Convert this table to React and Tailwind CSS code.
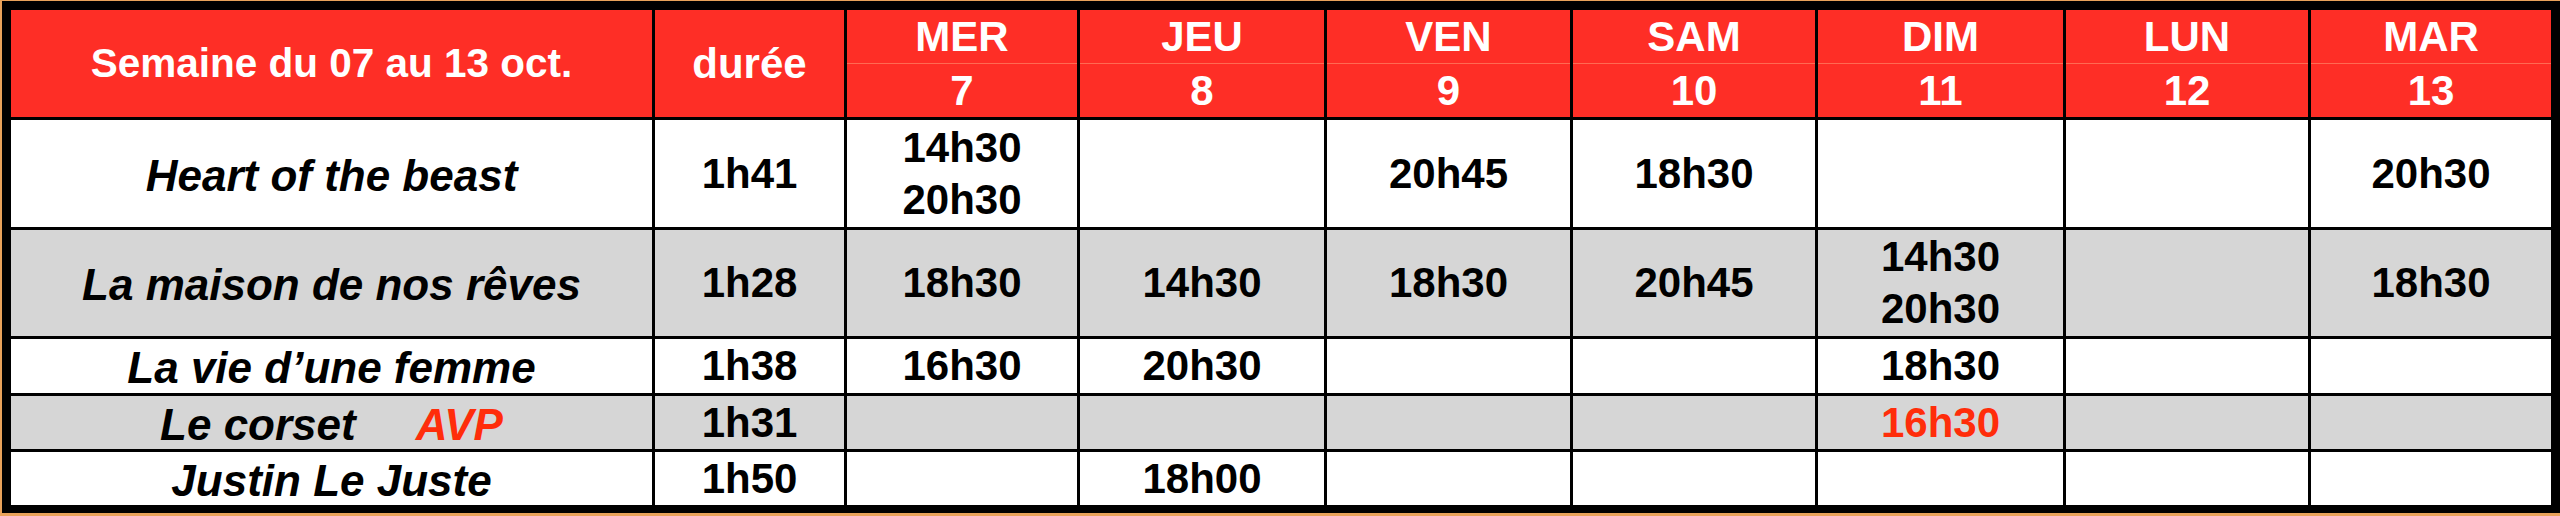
const days = [
  { name: "MER", num: "7" },
  { name: "JEU", num: "8" },
  { name: "VEN", num: "9" },
  { name: "SAM", num: "10" },
  { name: "DIM", num: "11" },
  { name: "LUN", num: "12" },
  { name: "MAR", num: "13" },
];

// one entry per film, times listed mer -> mar
const films = [
  {
    title: "Heart of the beast",
    duration: "1h41",
    gray: false,
    times: [["14h30", "20h30"], [], ["20h45"], ["18h30"], [], [], ["20h30"]],
  },
  {
    title: "La maison de nos rêves",
    duration: "1h28",
    gray: true,
    times: [["18h30"], ["14h30"], ["18h30"], ["20h45"], ["14h30", "20h30"], [], ["18h30"]],
  },
  {
    title: "La vie d’une femme",
    duration: "1h38",
    gray: false,
    times: [["16h30"], ["20h30"], [], [], ["18h30"], [], []],
  },
  {
    title: "Le corset",
    avp: true,
    duration: "1h31",
    gray: true,
    times: [[], [], [], [], ["16h30"], [], []],
    red: true,
  },
  {
    title: "Justin Le Juste",
    duration: "1h50",
    gray: false,
    times: [[], ["18h00"], [], [], [], [], []],
  },
];

function HeaderDay({ day }) {
  return (
    <div className="flex flex-col bg-[#fe2e26] text-[42px] font-bold leading-none text-white">
      <div className="flex h-[54px] items-center justify-center border-b border-[#ff6a52]">
        {day.name}
      </div>
      <div className="flex flex-1 items-center justify-center">{day.num}</div>
    </div>
  );
}

function FilmRow({ film }) {
  const bg = film.gray ? "bg-[#d6d6d6]" : "bg-white";
  return (
    <>
      <div className={`flex items-center justify-center text-[44px] font-bold italic leading-none ${bg}`}>
        <span className="pt-[4px]">{film.title}</span>
        {film.avp && <span className="ml-[60px] pt-[4px] text-[#ff2d0a]">AVP</span>}
      </div>
      <div className={`flex items-center justify-center text-[42px] font-bold leading-none ${bg}`}>
        {film.duration}
      </div>
      {film.times.map((t, i) => (
        <div
          key={i}
          className={`flex flex-col items-center justify-center text-[42px] font-bold leading-[52px] ${bg} ${
            film.red ? "text-[#ff2d0a]" : "text-black"
          }`}
        >
          {t.map((h) => (
            <span key={h}>{h}</span>
          ))}
        </div>
      ))}
    </>
  );
}

export default function App() {
  return (
    <div className="h-[516px] w-[2560px] bg-[#e9a25a] pb-[3px] pl-[2px] pt-[1px] font-['Liberation_Sans',Arial,sans-serif] text-black">
      <div className="h-full bg-black pb-[8px] pl-[9px] pr-[9px] pt-[9px]">
        <div className="grid grid-cols-[641px_189px_230px_244px_243px_242px_245px_242px_240px] grid-rows-[107px_107px_106px_54px_53px_53px] gap-[3px] bg-black">
          <div className="flex items-center justify-center bg-[#fe2e26] text-[40.5px] font-bold leading-none text-white">
            Semaine du 07 au 13 oct.
          </div>
          <div className="flex items-center justify-center bg-[#fe2e26] text-[42px] font-bold leading-none text-white">
            durée
          </div>
          {days.map((d) => (
            <HeaderDay key={d.name} day={d} />
          ))}
          {films.map((f) => (
            <FilmRow key={f.title} film={f} />
          ))}
        </div>
      </div>
    </div>
  );
}
